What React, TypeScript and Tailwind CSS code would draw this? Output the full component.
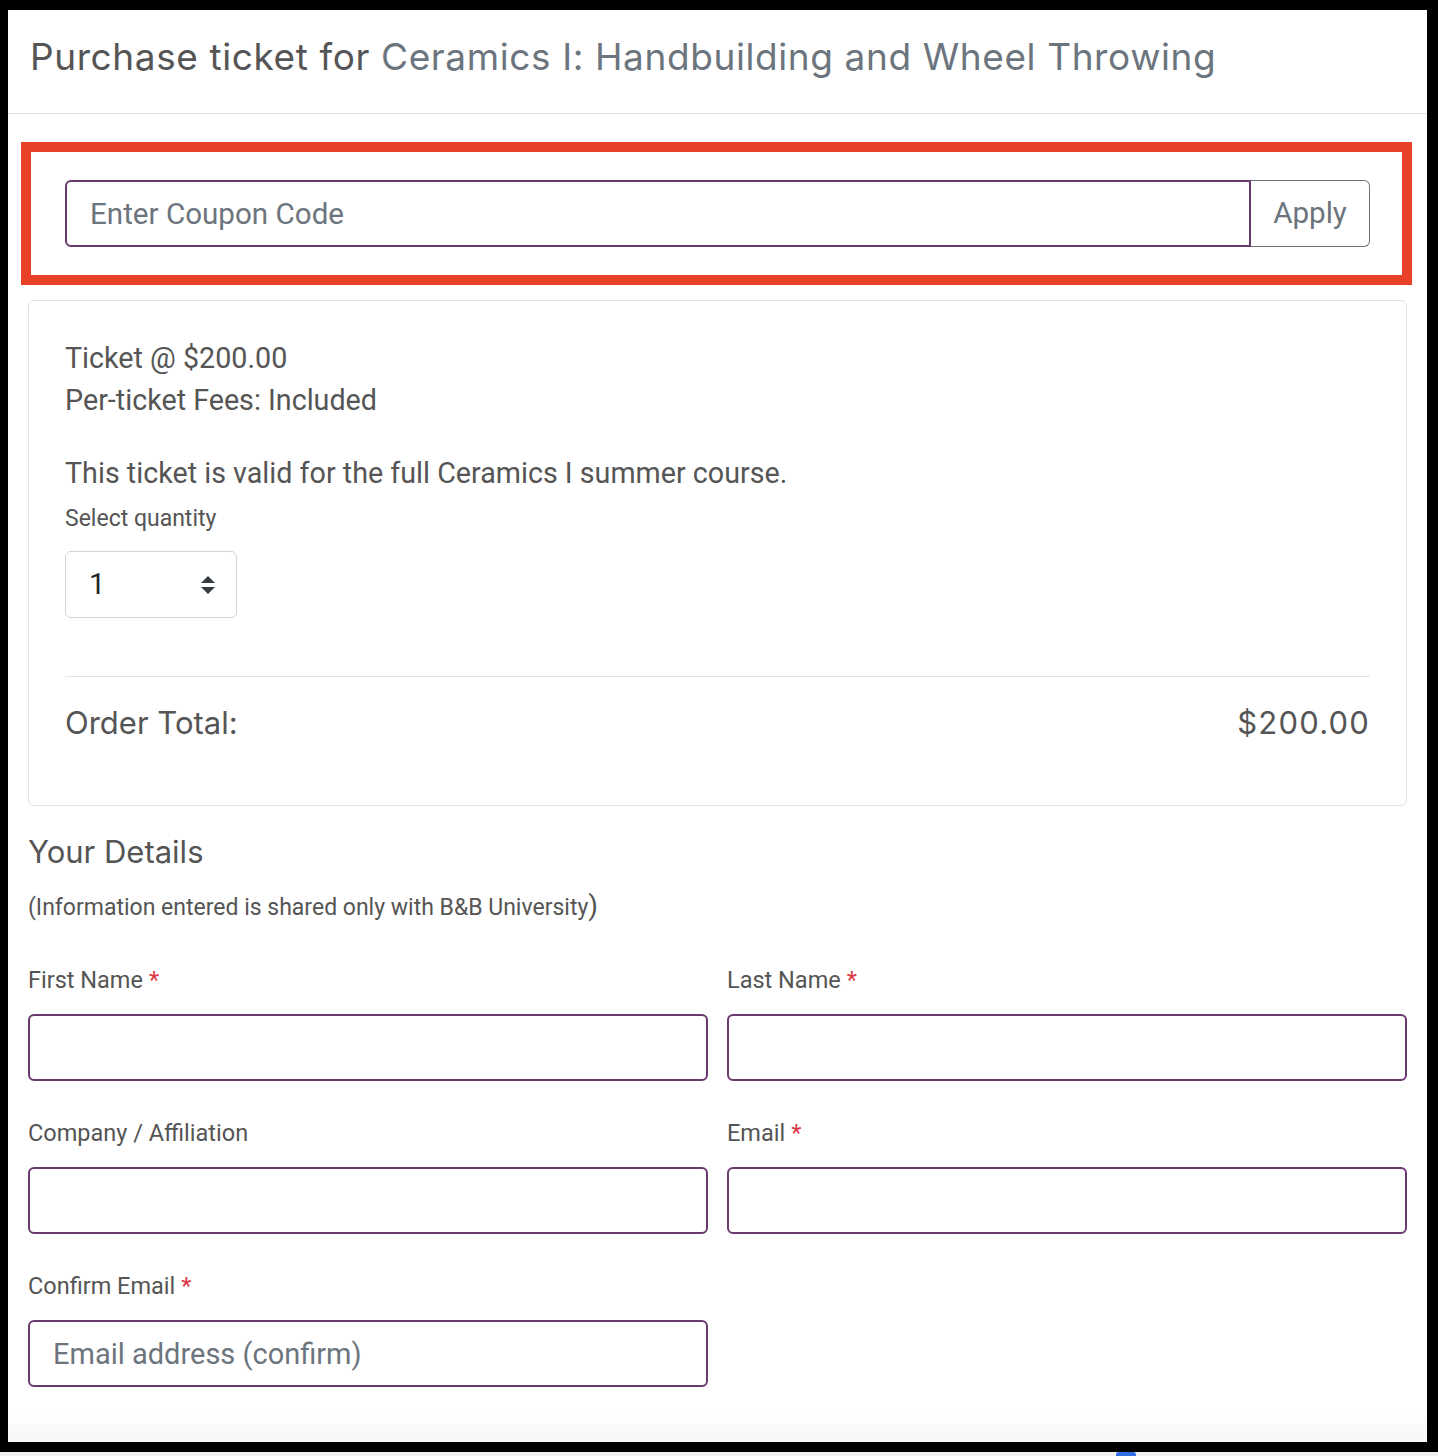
const heading = { fontFamily: "Inter, 'Noto Sans', sans-serif" };
const body = { fontFamily: "Roboto, 'Liberation Sans', sans-serif" };

function Field({ label, required, placeholder }: { label: string; required?: boolean; placeholder?: string }) {
  return (
    <div className="flex flex-col">
      <label className="text-[23.5px] leading-[33px] text-[#555]">
        {label}
        {required && <span className="ml-[6px] text-[#dc3545]">*</span>}
      </label>
      <input
        placeholder={placeholder}
        className="mt-[17px] h-[67px] w-full rounded-[6px] border-2 border-[#6a3970] bg-white px-[23px] text-[29px] text-[#555] outline-none placeholder:text-[#6c757d]"
      />
    </div>
  );
}

export default function App() {
  return (
    <div className="flex h-[1456px] w-[1438px] flex-col bg-black" style={body}>
      <div className="ml-[8px] mr-[11px] mt-[10px] flex h-[1432px] flex-col bg-gradient-to-b from-white from-[98%] to-[#f7f7f7]">
        <div className="flex h-[104px] items-center border-b border-[#dee2e6] pl-[22px] pb-[10px]">
          <h1 className="text-[37px] tracking-[0.6px] text-[#555]" style={heading}>
            Purchase ticket for <span className="text-[#6c757d]">Ceramics I: Handbuilding and Wheel Throwing</span>
          </h1>
        </div>

        <div className="flex flex-col px-[20px]">
          <div className="ml-[-7px] mr-[-5px] mt-[28px] border-[10px] border-[#e84127] pb-[28px] pl-[34px] pr-[32px] pt-[28px]">
            <div className="flex h-[67px]">
              <input
                placeholder="Enter Coupon Code"
                className="h-full flex-1 rounded-l-[6px] border-2 border-[#6a3970] px-[23px] text-[29.6px] text-[#555] outline-none placeholder:text-[#6c757d]"
              />
              <button className="h-full w-[119px] rounded-r-[6px] border border-l-0 border-[#6c757d] text-[29.6px] text-[#6c757d]">
                Apply
              </button>
            </div>
          </div>

          <div className="mt-[15px] flex flex-col rounded-[6px] border border-[#dee2e6] px-[36px] pb-[60px] pt-[36px] text-[#555]">
            <p className="text-[28.7px] leading-[42px]">Ticket @ $200.00</p>
            <p className="text-[28.7px] leading-[42px]">Per-ticket Fees: Included</p>
            <p className="mt-[31px] text-[28.7px] leading-[42px]">This ticket is valid for the full Ceramics I summer course.</p>
            <p className="mt-[8px] text-[23px] leading-[33px]">Select quantity</p>
            <div className="mt-[16px] flex h-[67px] w-[172px] items-center justify-between rounded-[6px] border border-[#ced4da] pl-[23px] pr-[20px]">
              <span className="text-[29px] text-[#212529]">1</span>
              <svg width="16" height="20" viewBox="0 0 16 20">
                <path d="M1 8 L8 1 L15 8 Z" fill="#343a40" />
                <path d="M1 12 L8 19 L15 12 Z" fill="#343a40" />
              </svg>
            </div>
            <div className="mt-[58px] border-t border-[#dee2e6]" />
            <div className="mt-[23px] flex items-center justify-between text-[31px] leading-[45px]" style={heading}>
              <span>Order Total:</span>
              <span className="tracking-[1.2px]">$200.00</span>
            </div>
          </div>

          <h2 className="mt-[23px] text-[31px] leading-[45px] text-[#555]" style={heading}>
            Your Details
          </h2>
          <p className="mt-[15px] text-[23px] leading-[33px] text-[#555]">
            (Information entered is shared only with B&amp;B University<span className="text-[28px]">)</span>
          </p>

          <div className="mt-[40px] grid grid-cols-2 gap-x-[19px] gap-y-[36px]">
            <Field label="First Name" required />
            <Field label="Last Name" required />
            <Field label="Company / Affiliation" />
            <Field label="Email" required />
            <Field label="Confirm Email" required placeholder="Email address (confirm)" />
          </div>
        </div>
      </div>
      <div className="mt-[10px] flex h-[4px] bg-[#f2f2f2]">
        <div className="ml-[1116px] h-[4px] w-[20px] rounded-t-[3px] bg-[#2f6fe4]" />
      </div>
    </div>
  );
}
